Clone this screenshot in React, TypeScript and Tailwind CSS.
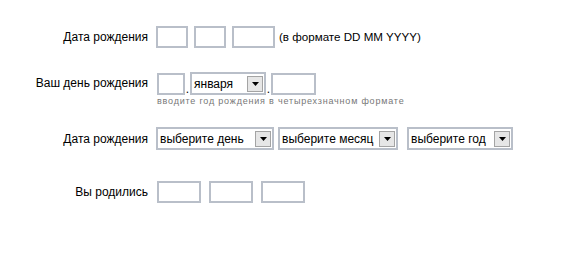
const font = { fontFamily: '"Liberation Sans", Arial, sans-serif' };

function Box({ w }: { w: string }) {
  return <div className={`${w} h-[22px] shrink-0 border-2 border-[#b9bfc9] bg-white`} />;
}

function Select({ label, w }: { label: string; w: string }) {
  return (
    <div className={`${w} h-[23px] shrink-0 border-2 border-[#b9bfc9] bg-white flex items-center justify-between pl-[2px] pr-[1px]`}>
      <span className="text-[12px] leading-none text-black whitespace-nowrap">{label}</span>
      <span className="w-[16px] h-[16px] bg-[#e6e6e6] border border-[#a4a4a4] flex items-center justify-center">
        <svg width="7" height="4" viewBox="0 0 7 4">
          <path d="M0 0h7L3.5 4z" fill="#000" />
        </svg>
      </span>
    </div>
  );
}

function Label({ text }: { text: string }) {
  return <div className="w-[149px] pr-[1px] text-right text-[12px] text-black shrink-0 whitespace-nowrap">{text}</div>;
}

export default function App() {
  return (
    <div className="w-[580px] h-[262px] bg-white pt-[26px]" style={font}>
      <div className="flex items-center h-[22px]">
        <Label text="Дата рождения" />
        <div className="flex items-center gap-[6px] ml-[7px]">
          <Box w="w-[32px]" />
          <Box w="w-[32px]" />
          <Box w="w-[43px]" />
          <span className="text-[11.6px] ml-[-2px] whitespace-nowrap">(в формате DD MM YYYY)</span>
        </div>
      </div>

      <div className="flex items-start mt-[24px]">
        <div className="h-[22px] flex items-center">
          <Label text="Ваш день рождения" />
        </div>
        <div className="ml-[8px]">
          <div className="flex items-end">
            <Box w="w-[28px]" />
            <span className="text-[12px] leading-none w-[5px] text-center">.</span>
            <Select label="января" w="w-[76px]" />
            <span className="text-[12px] leading-none w-[5px] text-center">.</span>
            <Box w="w-[45px]" />
          </div>
          <div className="text-[9px] tracking-[0.8px] text-[#777] mt-[2px] leading-none whitespace-nowrap">
            вводите год рождения в четырехзначном формате
          </div>
        </div>
      </div>

      <div className="flex items-center mt-[21px]">
        <Label text="Дата рождения" />
        <div className="flex items-center ml-[7px]">
          <Select label="выберите день" w="w-[118px]" />
          <div className="ml-[4px]">
            <Select label="выберите месяц" w="w-[120px]" />
          </div>
          <div className="ml-[9px]">
            <Select label="выберите год" w="w-[106px]" />
          </div>
        </div>
      </div>

      <div className="flex items-center mt-[31px]">
        <Label text="Вы родились" />
        <div className="flex items-center gap-[8px] ml-[8px]">
          <Box w="w-[44px]" />
          <Box w="w-[44px]" />
          <Box w="w-[44px]" />
        </div>
      </div>
    </div>
  );
}
